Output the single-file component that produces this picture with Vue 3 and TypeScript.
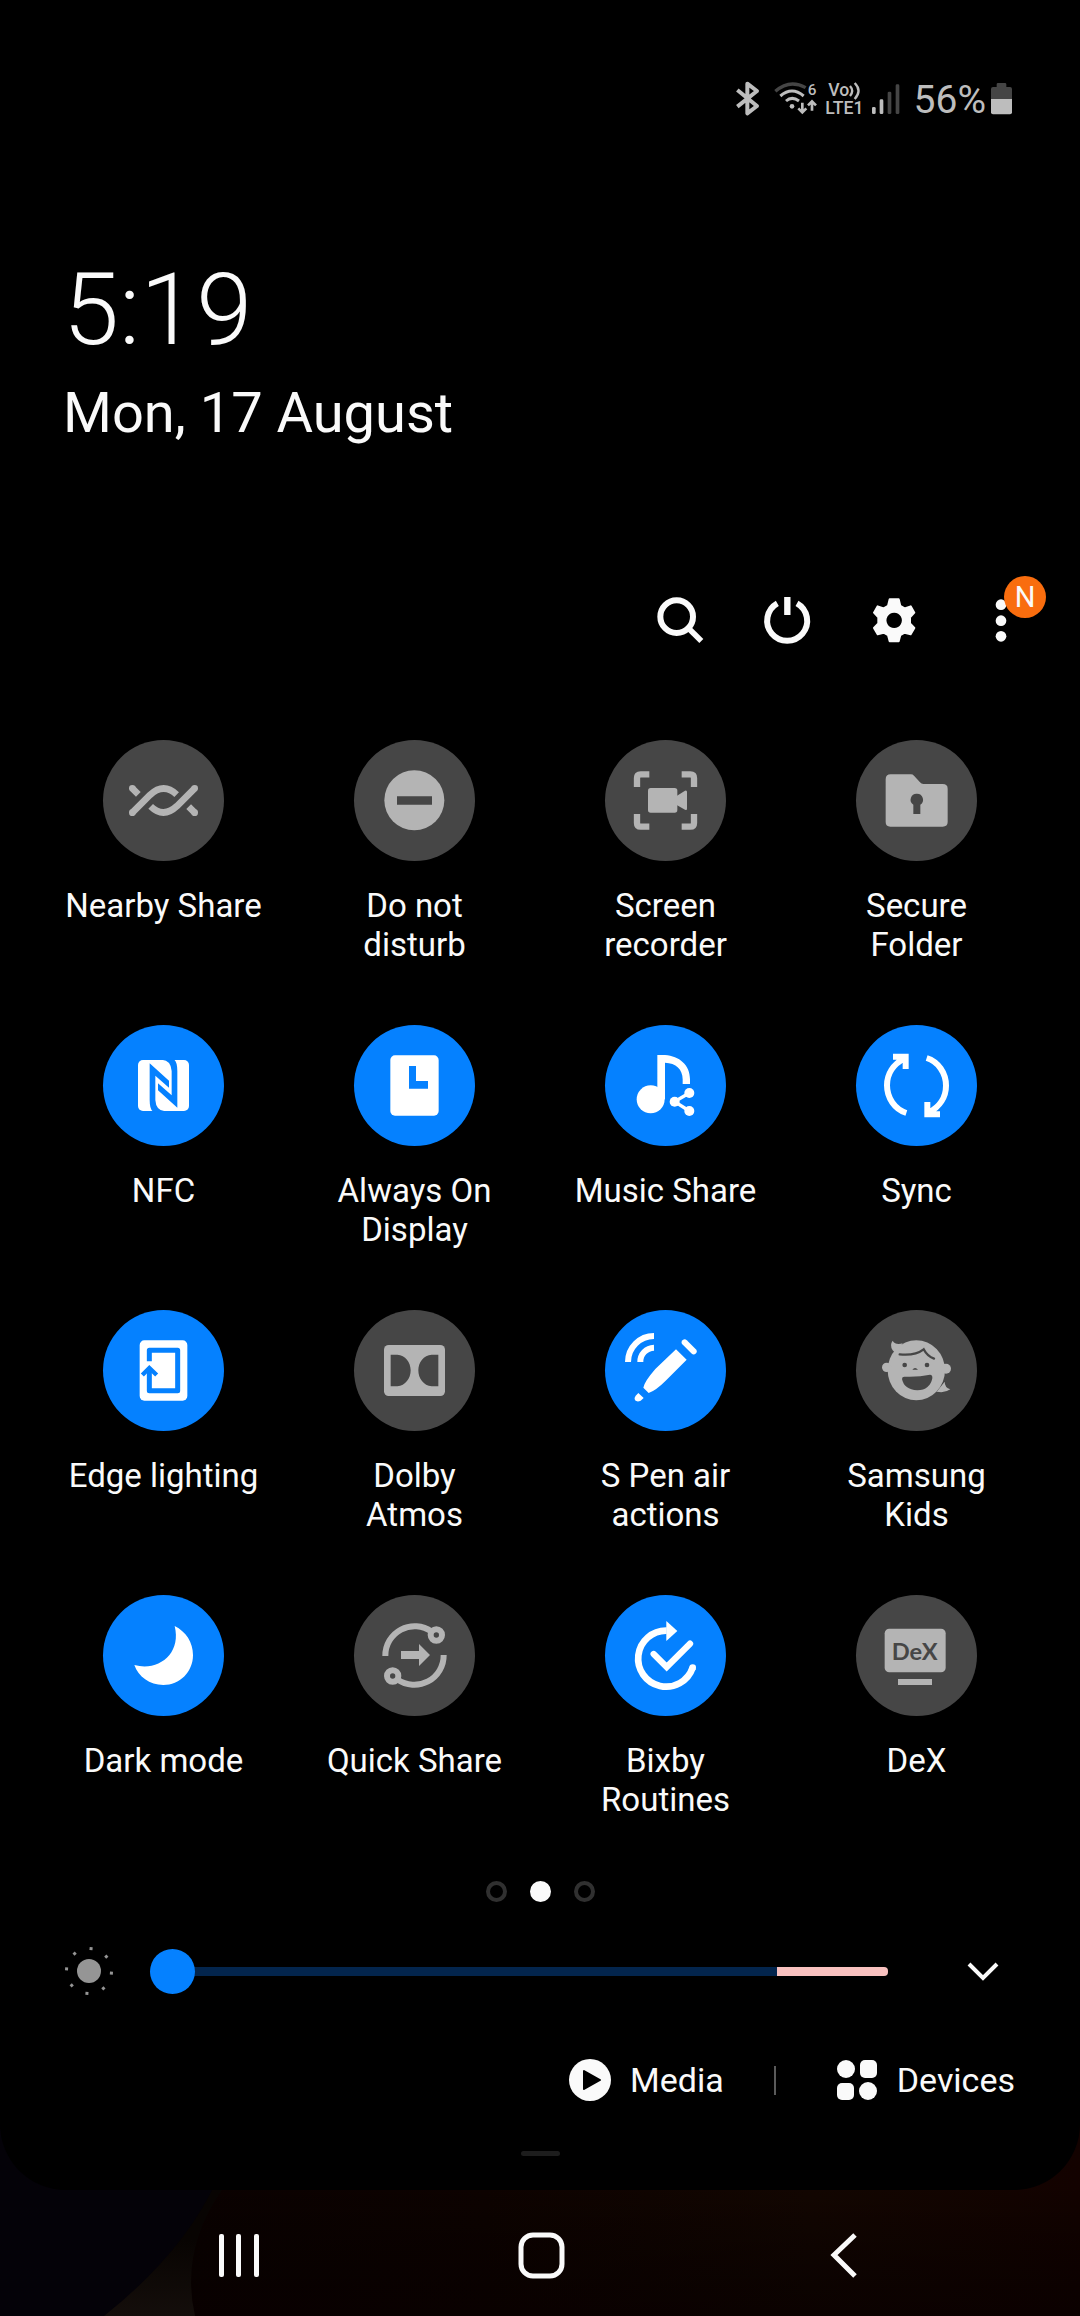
<script setup lang="ts">
import { ref } from 'vue'

interface Tile {
  label: string
  on: boolean
  box: string
  art: string
}

// Icon artwork is drawn three units to the pixel; --disc is the colour of the circle behind it.
const tiles = ref<Tile[]>([
  {
    label: 'Nearby Share', on: false, box: '159 60 363 363',
    art: `<g fill="none" stroke="currentColor" stroke-width="20"><path d="M247 205L265 223M247 278L300 225Q341 187 380 224M434 205L381 258Q340 296 302 259M434 278L416 260"/></g>
      <g fill="currentColor"><circle cx="247" cy="205" r="10"/><circle cx="247" cy="278" r="10"/><circle cx="434" cy="205" r="10"/><circle cx="434" cy="278" r="10"/></g>`,
  },
  {
    label: 'Do not\ndisturb', on: false, box: '912 60 363 363',
    art: `<circle cx="1093" cy="241" r="90" fill="currentColor"/><path fill="var(--disc)" d="M1041 229h105v25h-105z"/>`,
  },
  {
    label: 'Screen\nrecorder', on: false, box: '165 60 363 363',
    art: `<path fill="none" stroke="currentColor" stroke-width="19" d="M298 163H272Q261 163 261 174V201M395 163H421Q432 163 432 174V201M261 282V309Q261 320 272 320H298M432 282V309Q432 320 421 320H395"/>
      <rect x="294" y="204" width="88" height="74" rx="8" fill="currentColor"/><path fill="currentColor" d="M380 228L405 212Q411 210 411 216V266Q411 272 405 269L380 255z"/>`,
  },
  {
    label: 'Secure\nFolder', on: false, box: '918 60 363 363',
    art: `<path fill="currentColor" d="M1022 163H1083Q1088 163 1092 167L1110 187Q1114 192 1120 192H1178Q1193 192 1193 206V306Q1193 320 1178 320H1021Q1007 320 1007 306V178Q1007 163 1022 163Z"/>
      <path fill="var(--disc)" d="M1101 221a18 18 0 0 1 10 33V282h-21V254a18 18 0 0 1 11-33z"/>`,
  },
  {
    label: 'NFC', on: true, box: '159 45 363 363',
    art: `<rect x="264" y="150" width="153" height="153" rx="15" fill="currentColor"/>
      <g fill="var(--disc)"><path d="M299 160L357 212V233L316 197V270Q318 302 345 304H308Q299 296 299 270Z"/><path transform="rotate(180 340.5 226.5)" d="M299 160L357 212V233L316 197V270Q318 302 345 304H308Q299 296 299 270Z"/></g>`,
  },
  {
    label: 'Always On\nDisplay', on: true, box: '912 45 363 363',
    art: `<rect x="1021" y="136" width="145" height="181" rx="14" fill="currentColor"/><path fill="var(--disc)" d="M1077 168H1098V213H1134V236H1077Z"/>`,
  },
  {
    label: 'Music Share', on: true, box: '165 45 363 363',
    art: `<g fill="currentColor"><circle cx="302" cy="268" r="42"/><path d="M322 135H345C388 138 420 165 420 208V222H398V208C398 178 378 159 345 158V268H322z"/>
      <circle cx="418" cy="249" r="15"/><circle cx="374" cy="275" r="15"/><circle cx="418" cy="303" r="15"/></g><path fill="none" stroke="currentColor" stroke-width="10" d="M418 249L374 275L418 303"/>`,
  },
  {
    label: 'Sync', on: true, box: '918 45 363 363',
    art: `<g fill="none" stroke="currentColor" stroke-width="18"><path d="M1069 309C1034 298 1011 264 1011 226C1011 192 1030 163 1062 146M1029 140H1067V177"/>
      <path transform="rotate(180 1099.5 226.5)" d="M1069 309C1034 298 1011 264 1011 226C1011 192 1030 163 1062 146M1029 140H1067V177"/></g>`,
  },
  {
    label: 'Edge lighting', on: true, box: '159 45 363 363',
    art: `<rect x="269" y="136" width="143" height="181" rx="14" fill="currentColor"/>
      <g fill="none" stroke="var(--disc)"><path stroke-width="15" stroke-linejoin="round" d="M298 199V166H383V287H298V225"/><path stroke-width="13" d="M277 240L298 219L320 240"/></g>`,
  },
  {
    label: 'Dolby\nAtmos', on: false, box: '912 45 363 363',
    art: `<rect x="1002" y="150" width="183" height="153" rx="14" fill="currentColor"/>
      <path fill="var(--disc)" d="M1022 179H1042C1066 181 1082 201 1082 226S1066 272 1042 274H1022ZM1165 179H1145C1121 181 1105 201 1105 226S1121 272 1145 274H1165Z"/>`,
  },
  {
    label: 'S Pen air\nactions', on: true, box: '165 45 363 363',
    art: `<g fill="none" stroke="currentColor" stroke-width="18"><path d="M234 201A78 78 0 0 1 312 123M271 201A42 42 0 0 1 312 158"/><path stroke-linecap="round" d="M404 142L431 169"/></g>
      <path fill="currentColor" d="M378 163L410 194L347 257Q318 286 296 294L280 278Q283 260 316 222ZM265 294L281 309L272 317Q262 322 255 316Q252 307 257 302Z"/>`,
  },
  {
    label: 'Samsung\nKids', on: false, box: '918 45 363 363',
    art: `<g fill="currentColor"><ellipse cx="1099" cy="226" rx="86" ry="90"/><circle cx="1010" cy="217" r="14"/><circle cx="1188" cy="221" r="15"/><path d="M1058 145Q1036 151 1028 137Q1018 150 1028 166L1038 176zM1184 260Q1184 278 1201 283Q1185 295 1160 290z"/></g>
      <g fill="var(--disc)"><circle cx="1064" cy="210" r="7"/><circle cx="1131" cy="210" r="7"/><path d="M1087 224Q1095 214 1104 224zM1063 245Q1105 247 1140 239Q1148 239 1147 250Q1140 285 1102 286Q1062 283 1056 252Q1056 245 1063 245z"/></g>
      <path fill="none" stroke="var(--disc)" stroke-width="7" stroke-linecap="round" d="M1049 178Q1095 183 1121 163Q1132 184 1152 191"/>`,
  },
  {
    label: 'Dark mode', on: true, box: '159 45 363 363',
    art: `<path fill="currentColor" d="M374 138C408 155 429 187 429 225C429 276 389 315 340 315C299 315 265 290 253 255C325 275 395 222 374 138Z"/>`,
  },
  {
    label: 'Quick Share', on: false, box: '912 45 363 363',
    art: `<g fill="none" stroke="currentColor" stroke-width="18"><path d="M1006 228A88 88 0 0 1 1145 155"/><circle cx="1159" cy="165" r="17"/>
      <g transform="rotate(180 1093.5 226.5)"><path d="M1006 228A88 88 0 0 1 1145 155"/><circle cx="1159" cy="165" r="17"/></g></g>
      <path fill="currentColor" d="M1053 213H1107V192L1140 225L1107 258V237H1053Z"/>`,
  },
  {
    label: 'Bixby\nRoutines', on: true, box: '165 45 363 363',
    art: `<g fill="none" stroke="currentColor"><path stroke-width="20" d="M350 152A84 84 0 1 0 428 263"/><path stroke-width="19" stroke-linecap="round" d="M311 222L350 261L420 191"/></g>
      <g fill="currentColor"><circle cx="428" cy="263" r="10"/><path d="M349 123L382 153L349 183z"/></g>`,
  },
  {
    label: 'DeX', on: false, box: '918 45 363 363',
    art: `<rect x="1004" y="146" width="183" height="131" rx="14" fill="currentColor"/><path fill="currentColor" d="M1044 297h102v18h-102z"/>
      <text x="1094" y="239" text-anchor="middle" font-family="Lato, sans-serif" font-weight="700" font-size="71" fill="var(--disc)">DeX</text>`,
  },
])

const pages = ['Page 1', 'Page 2', 'Page 3']
const page = ref(1)
const brightness = ref(0)
const rays = [4, 49, 94, 139, 184, 229, 274, 319]
</script>

<template>
  <div class="screen">
    <svg class="wallpaper" viewBox="0 0 1080 216" preserveAspectRatio="none" aria-hidden="true">
      <defs>
        <linearGradient id="warm" x1="0" x2="1" y1="0" y2="0">
          <stop offset="0" stop-color="#050100" />
          <stop offset="0.18" stop-color="#0a0100" />
          <stop offset="0.45" stop-color="#0d0200" />
          <stop offset="0.75" stop-color="#130601" />
          <stop offset="1" stop-color="#130200" />
        </linearGradient>
        <linearGradient id="shade" x1="0" x2="0" y1="0" y2="1">
          <stop offset="0.4" stop-color="#000" stop-opacity="0" />
          <stop offset="1" stop-color="#080000" stop-opacity="0.7" />
        </linearGradient>
        <linearGradient id="strip" x1="0" x2="0" y1="0" y2="1">
          <stop offset="0.4" stop-color="#080402" />
          <stop offset="1" stop-color="#140e0b" />
        </linearGradient>
      </defs>
      <rect width="1080" height="216" fill="url(#warm)" />
      <rect width="1080" height="216" fill="url(#shade)" />
      <path d="M222 90Q180 150 195 216H0V90z" fill="url(#strip)" />
      <path d="M0 0H240Q225 120 104 216H0z" fill="#040208" />
    </svg>

    <main class="panel">
      <div class="status">
        <svg class="bt" viewBox="48 60 72 108" role="img" aria-label="Bluetooth">
          <path fill="none" stroke="currentColor" stroke-width="12" stroke-linejoin="round" d="M52 90L111 138L82 160V71L111 93L52 140" />
        </svg>
        <svg class="wifi" viewBox="162 60 132 108" role="img" aria-label="Wi-Fi 6">
          <path class="dim-line" fill="none" stroke-width="10" d="M166 94Q209 56 257 83" />
          <g fill="none" stroke="currentColor" stroke-width="9">
            <path d="M181 108Q216 78 251 108M198 123Q216 107 237 123" />
            <path stroke-width="8" d="M247 128V156M235 145L247 157L259 145M276 152V126M264 136L276 124L288 136" />
          </g>
          <circle cx="216" cy="139" r="7" fill="currentColor" />
          <text x="263" y="105" font-size="46" font-weight="500" fill="currentColor">6</text>
        </svg>
        <svg class="volte" viewBox="315 60 117 108" role="img" aria-label="VoLTE">
          <g fill="currentColor" font-weight="500" font-size="53">
            <text x="325" y="108">Vo</text>
            <text x="316" y="162">LTE1</text>
          </g>
          <path fill="none" stroke="currentColor" stroke-width="7" d="M390 78Q403 92 390 108M404 69Q427 92 404 117" />
        </svg>
        <svg class="signal" viewBox="453 60 87 108" role="img" aria-label="Signal strength">
          <g fill="currentColor">
            <rect x="456" y="141" width="11" height="21" rx="4" />
            <rect x="479" y="118" width="11" height="44" rx="4" />
          </g>
          <g class="dim">
            <rect x="503" y="95" width="11" height="67" rx="4" />
            <rect x="527" y="73" width="11" height="89" rx="4" />
          </g>
        </svg>
        <span class="percent">56%</span>
        <svg class="battery" viewBox="810 60 69 108" role="img" aria-label="Battery">
          <path class="dim" d="M830 81V73Q830 69 834 69H855Q859 69 859 73V81H870Q876 81 876 87V120H813V87Q813 81 819 81z" />
          <path fill="currentColor" d="M813 117H876V157Q876 163 870 163H819Q813 163 813 157z" />
        </svg>
      </div>

      <time class="clock">5:19</time>
      <div class="date">Mon, 17 August</div>

      <div class="actions">
        <button type="button" aria-label="Search">
          <svg viewBox="30 90 180 180" fill="none" stroke="currentColor">
            <circle cx="110" cy="170" r="49" stroke-width="18" />
            <path stroke-width="17" d="M144 203L184 243" />
          </svg>
        </button>
        <button type="button" aria-label="Power off">
          <svg viewBox="352 90 180 180" fill="none" stroke="currentColor">
            <path stroke-width="18" d="M413 130A60 60 0 1 0 472 130" />
            <path stroke-width="19" d="M443 111V165" />
          </svg>
        </button>
        <button type="button" aria-label="Settings">
          <svg viewBox="673 90 180 180">
            <path fill="currentColor" stroke="currentColor" stroke-width="6" stroke-linejoin="round" fill-rule="evenodd" d="M750 118H777L782 138L795 145L813 139L824 158L811 172V190L824 204L813 223L795 218L782 225L777 244H750L745 225L732 218L714 223L703 204L716 190V172L703 158L714 139L732 145L745 138ZM763 155a26 26 0 1 0 1 0z" />
          </svg>
        </button>
        <button type="button" class="more" aria-label="More options">
          <svg viewBox="994 90 180 180" fill="currentColor">
            <circle cx="1084" cy="134" r="16" />
            <circle cx="1084" cy="182" r="16" />
            <circle cx="1084" cy="229" r="16" />
          </svg>
          <span class="badge">N</span>
        </button>
      </div>

      <section class="grid" aria-label="Quick settings">
        <button
          v-for="tile in tiles"
          :key="tile.label"
          type="button"
          class="tile"
          :class="{ on: tile.on }"
          :aria-pressed="tile.on"
          @click="tile.on = !tile.on"
        >
          <span class="disc"><svg :viewBox="tile.box" aria-hidden="true" v-html="tile.art"></svg></span>
          <span class="label">{{ tile.label }}</span>
        </button>
      </section>

      <div class="pager">
        <button
          v-for="(name, i) in pages"
          :key="name"
          type="button"
          :aria-label="name"
          :class="{ current: i === page }"
          @click="page = i"
        ></button>
      </div>

      <div class="brightness">
        <svg class="sun" viewBox="-24 -24 48 48" aria-hidden="true">
          <circle r="12" fill="#959595" />
          <rect v-for="a in rays" :key="a" x="-1" y="-24" width="3" height="3" fill="#959595" :transform="`rotate(${a})`" />
        </svg>
        <input v-model.number="brightness" type="range" min="0" max="100" aria-label="Brightness" />
        <button type="button" class="expand" aria-label="Brightness options">
          <svg viewBox="0 0 34 22"><path fill="none" stroke="currentColor" stroke-width="4" d="M3 4L17 18L31 4" /></svg>
        </button>
      </div>

      <div class="links">
        <button type="button">
          <svg viewBox="0 0 42 42" aria-hidden="true">
            <circle cx="21" cy="21" r="21" fill="currentColor" />
            <path fill="#000" stroke="#000" stroke-width="2" stroke-linejoin="round" d="M15 12L31 21L15 30z" />
          </svg>
          Media
        </button>
        <span class="divider"></span>
        <button type="button">
          <svg viewBox="0 0 42 42" fill="currentColor" aria-hidden="true">
            <circle cx="10" cy="10" r="9" />
            <rect x="24" y="1" width="17" height="18" rx="5" />
            <rect x="1" y="24" width="17" height="17" rx="5" />
            <circle cx="32" cy="32" r="9" />
          </svg>
          Devices
        </button>
      </div>

      <div class="handle"></div>
    </main>

    <nav class="nav">
      <button type="button" aria-label="Recents">
        <svg viewBox="0 0 48 48" fill="currentColor">
          <rect x="4" y="3" width="5" height="43" rx="2" />
          <rect x="21" y="3" width="5" height="43" rx="2" />
          <rect x="39" y="3" width="5" height="43" rx="2" />
        </svg>
      </button>
      <button type="button" aria-label="Home">
        <svg viewBox="0 0 48 48"><rect x="4" y="4" width="41" height="41" rx="12" fill="none" stroke="currentColor" stroke-width="5" /></svg>
      </button>
      <button type="button" aria-label="Back">
        <svg viewBox="0 0 48 48"><path fill="none" stroke="currentColor" stroke-width="5" d="M36 4L15 24L36 45" /></svg>
      </button>
    </nav>
  </div>
</template>

<style>
body {
  margin: 0;
  background: #000;
}
</style>

<style scoped>
.screen {
  position: relative;
  display: flex;
  flex-direction: column;
  min-height: 100vh;
  background: #000;
  color: #fafafa;
  font-family: Roboto, sans-serif;
}

.wallpaper {
  position: absolute;
  left: 0;
  bottom: 0;
  width: 100%;
  height: 216px;
}

.panel {
  position: relative;
  display: flex;
  flex-direction: column;
  padding: 80px 0 34px;
  border-radius: 0 0 66px 66px;
  background: #000;
}

button {
  padding: 0;
  border: 0;
  background: none;
  color: inherit;
  font: inherit;
  cursor: pointer;
}

svg {
  display: block;
}

.status {
  display: flex;
  justify-content: flex-end;
  align-items: center;
  height: 36px;
  padding-right: 67px;
  color: #bdbdbd;
}

.status svg {
  height: 36px;
  overflow: visible;
}

.dim {
  fill: #454545;
}

.dim-line {
  stroke: #454545;
}

.bt {
  width: 24px;
  margin-right: 14px;
}

.wifi {
  width: 44px;
  margin-right: 7px;
}

.volte {
  width: 39px;
  margin-right: 7px;
}

.signal {
  width: 29px;
  margin-right: 14px;
}

.percent {
  padding-top: 3px;
  margin-right: 4px;
  font-size: 39px;
  line-height: 46px;
}

.battery {
  width: 23px;
}

.clock {
  margin: 134px 63px 0;
  font-size: 101px;
  font-weight: 300;
  line-height: 120px;
}

.date {
  margin: 10px 63px 0;
  font-size: 56px;
  line-height: 66px;
}

.actions {
  display: flex;
  justify-content: flex-end;
  margin-top: 144px;
  padding-right: 26px;
}

.actions button {
  position: relative;
  display: flex;
  justify-content: center;
  width: 107px;
}

.actions svg {
  width: 60px;
  height: 60px;
}

.badge {
  position: absolute;
  top: -14px;
  right: 8px;
  width: 42px;
  border-radius: 50%;
  background: #f96d0e;
  font-size: 29px;
  line-height: 42px;
  text-align: center;
}

.grid {
  display: grid;
  grid-template-columns: repeat(4, 1fr);
  row-gap: 61px;
  margin-top: 90px;
  padding: 0 38px;
}

.tile {
  --disc: #464646;
  display: flex;
  flex-direction: column;
  align-items: center;
  gap: 25px;
}

.tile.on {
  --disc: #0581ff;
}

.disc {
  width: 121px;
  height: 121px;
  border-radius: 50%;
  background: var(--disc);
  color: #b4b4b4;
}

.on .disc {
  color: #fff;
}

.disc svg {
  width: 100%;
  height: 100%;
}

.label {
  min-height: 78px;
  font-size: 33px;
  line-height: 39px;
  text-align: center;
  white-space: pre-line;
}

.pager {
  display: flex;
  justify-content: center;
  gap: 23px;
  margin-top: 62px;
}

.pager button {
  box-sizing: border-box;
  width: 21px;
  height: 21px;
  border: 4px solid #303030;
  border-radius: 50%;
}

.pager .current {
  border-color: #fafafa;
  background: #fafafa;
}

.brightness {
  display: flex;
  align-items: center;
  margin-top: 45px;
  padding: 0 80px 0 65px;
}

.sun {
  width: 48px;
  height: 48px;
}

.brightness input {
  flex: 1;
  min-width: 0;
  height: 45px;
  margin: 0 78px 0 37px;
  appearance: none;
  background: none;
}

.brightness input::-webkit-slider-runnable-track {
  height: 9px;
  border-radius: 4px;
  background: linear-gradient(to right, #03254d 85%, #f8c1bf 85%);
}

.brightness input::-webkit-slider-thumb {
  width: 45px;
  height: 45px;
  margin-top: -18px;
  border-radius: 50%;
  appearance: none;
  background: #0581ff;
}

.expand svg {
  width: 34px;
  height: 22px;
}

.links {
  display: flex;
  justify-content: flex-end;
  align-items: center;
  margin-top: 64px;
  padding-right: 65px;
  font-size: 34px;
  line-height: 42px;
}

.links button {
  display: flex;
  align-items: center;
  gap: 19px;
}

.links svg {
  width: 42px;
  height: 42px;
}

.divider {
  width: 2px;
  height: 29px;
  margin: 0 60px 0 50px;
  background: #5a5a5a;
}

.handle {
  align-self: center;
  width: 39px;
  height: 5px;
  margin-top: 50px;
  border-radius: 3px;
  background: #1d1d1d;
}

.nav {
  position: relative;
  display: grid;
  grid-template-columns: repeat(3, 1fr);
  flex: 1;
  min-height: 122px;
  padding: 4px 86px 0 88px;
}

.nav button {
  display: flex;
  justify-content: center;
  align-items: center;
}

.nav svg {
  width: 48px;
  height: 48px;
}
</style>
